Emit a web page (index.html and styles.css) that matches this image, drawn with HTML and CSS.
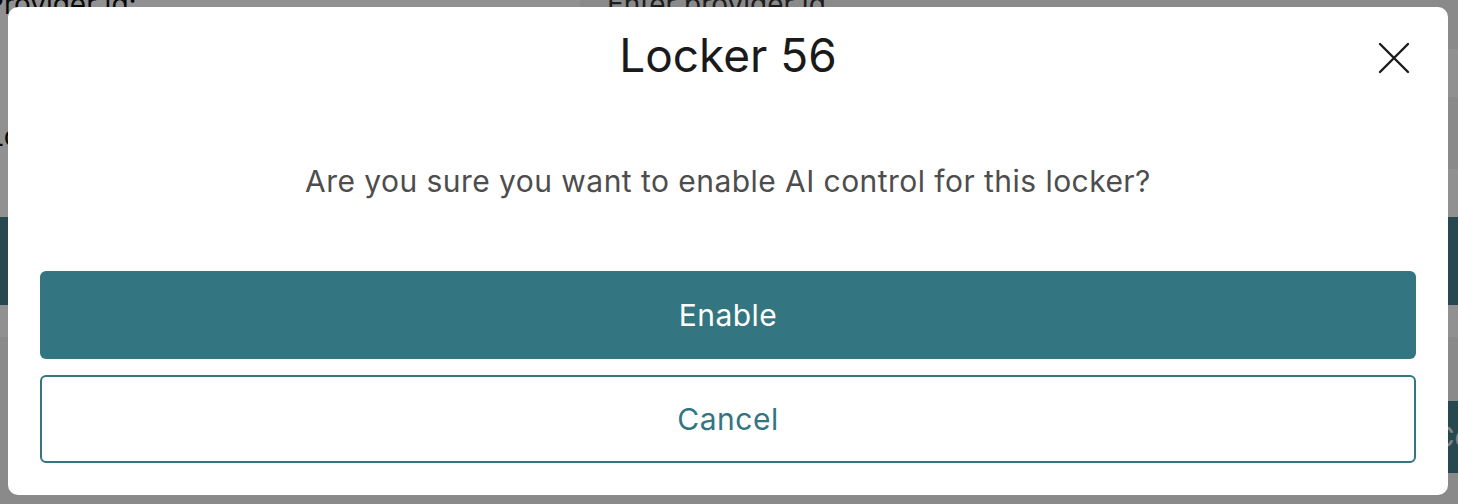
FILE: index.html
```html
<!DOCTYPE html>
<html lang="en">
<head>
    <meta charset="UTF-8">
    <meta name="viewport" content="width=device-width, initial-scale=1.0">
    <title>Locker 56</title>
    <link rel="stylesheet" href="styles.css">
</head>
<body>
    <div class="page">
        <div class="field-row">
            <label class="field-label">Provider id:</label>
            <div class="field-input">Enter provider id</div>
        </div>
        <div class="field-row row-tall">
            <label class="field-label">Locker:</label>
            <div class="field-spacer"></div>
        </div>
        <div class="save-bar"></div>
        <div class="gap-strip"></div>
        <div class="list-area">
            <div class="list-btn">Control</div>
        </div>
    </div>

    <div class="overlay">
        <div class="modal">
            <div class="modal-header">
                <span></span>
                <h2 class="modal-title">Locker 56</h2>
                <button class="close-btn" aria-label="Close">
                    <svg width="32" height="32" viewBox="0 0 32 32" fill="none" stroke="#1a1a1a" stroke-width="2.4" stroke-linecap="round">
                        <path d="M2 2 L30 30 M30 2 L2 30"/>
                    </svg>
                </button>
            </div>
            <p class="modal-text">Are you sure you want to enable AI control for this locker?</p>
            <div class="modal-actions">
                <button class="btn btn-primary">Enable</button>
                <button class="btn btn-outline">Cancel</button>
            </div>
        </div>
    </div>
</body>
</html>
```

FILE: styles.css
```css
body {
    font-family: Inter, 'Noto Sans', sans-serif;
    margin: 0;
    background-color: #fff;
    overflow: hidden;
}
.page {
    height: 504px;
    display: flex;
    flex-direction: column;
}
.field-row {
    display: flex;
    height: 49px;
}
.field-label {
    width: 594px;
    font-size: 28px;
    line-height: 34px;
    color: #111;
    margin-top: -13px;
    margin-left: -14px;
}
.field-input {
    flex: 1;
    background-color: #f3f3f3;
    font-size: 28px;
    line-height: 34px;
    color: #333;
    padding-left: 27px;
    margin-top: -13px;
}
.row-tall {
    height: 168px;
}
.row-tall .field-label {
    margin-top: 70px;
    margin-left: -12px;
}
.field-spacer {
    flex: 1;
    background: linear-gradient(#fff 0 0) 0 0 / 100% 48px no-repeat, linear-gradient(#f3f3f3 0 0) 0 48px / 100% 72px no-repeat;
}
.save-bar {
    height: 88px;
    background-color: #43818b;
}
.gap-strip {
    height: 32px;
}
.list-area {
    flex: 1;
    background-color: #f3f3f3;
    display: flex;
    justify-content: flex-end;
    padding-top: 64px;
}
.list-btn {
    height: 72px;
    width: 140px;
    margin-right: -100px;
    background-color: #43818b;
    color: #e8e8e8;
    font-size: 28px;
    line-height: 72px;
    padding-left: 16px;
    box-sizing: border-box;
}
.overlay {
    position: fixed;
    inset: 0;
    background-color: rgba(0, 0, 0, 0.43);
    display: flex;
    padding: 7px 10px 9px 8px;
}
.modal {
    flex: 1;
    background-color: #fff;
    border-radius: 10px;
    padding: 20px 32px 32px;
    display: flex;
    flex-direction: column;
}
.modal-header {
    display: grid;
    grid-template-columns: 1fr auto 1fr;
    align-items: center;
}
.modal-title {
    margin: 0;
    font-size: 46px;
    font-weight: 400;
    line-height: 56px;
    color: #1a1a1a;
}
.close-btn {
    justify-self: end;
    background: none;
    border: none;
    padding: 0;
    margin-right: 6px;
    margin-top: 6px;
    width: 32px;
    height: 32px;
    cursor: pointer;
}
.close-btn svg {
    display: block;
}
.modal-text {
    margin: 80px 0 0;
    text-align: center;
    font-size: 30px;
    line-height: 36px;
    letter-spacing: 0.45px;
    color: #4d4d4d;
}
.modal-actions {
    margin-top: auto;
    display: flex;
    flex-direction: column;
    gap: 16px;
}
.btn {
    height: 88px;
    border-radius: 6px;
    font-family: Inter, 'Noto Sans', sans-serif;
    font-size: 30px;
    letter-spacing: 0.5px;
    cursor: pointer;
}
.btn-primary {
    background-color: #337580;
    color: #fff;
    border: none;
}
.btn-outline {
    background-color: #fff;
    color: #337580;
    border: 2px solid #337580;
}
```
